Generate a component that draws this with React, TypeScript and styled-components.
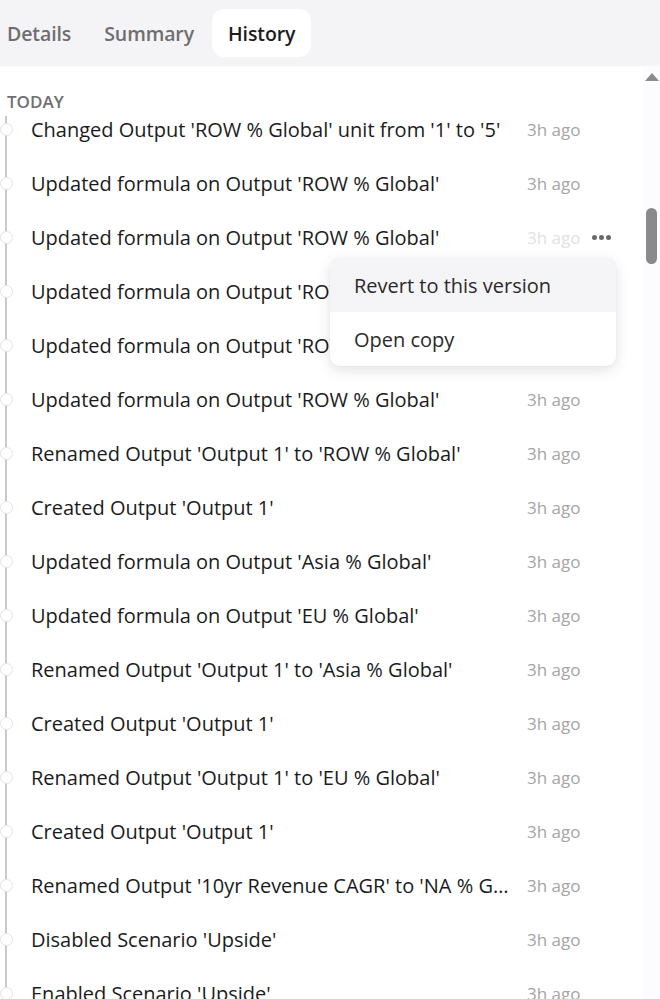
import { createGlobalStyle } from 'styled-components';
import styled from 'styled-components';

const GlobalStyle = createGlobalStyle`
    html, body {
        margin: 0;
        padding: 0;
        background: #ffffff;
        font-family: 'Open Sans', 'Noto Sans', Arial, sans-serif;
    }
    * {
        box-sizing: border-box;
    }
`;

interface Entry {
    text: string;
    time: string;
}

const entries: Entry[] = [
    { text: "Changed Output 'ROW % Global' unit from '1' to '5'", time: '3h ago' },
    { text: "Updated formula on Output 'ROW % Global'", time: '3h ago' },
    { text: "Updated formula on Output 'ROW % Global'", time: '3h ago' },
    { text: "Updated formula on Output 'ROW % Global'", time: '3h ago' },
    { text: "Updated formula on Output 'ROW % Global'", time: '3h ago' },
    { text: "Updated formula on Output 'ROW % Global'", time: '3h ago' },
    { text: "Renamed Output 'Output 1' to 'ROW % Global'", time: '3h ago' },
    { text: "Created Output 'Output 1'", time: '3h ago' },
    { text: "Updated formula on Output 'Asia % Global'", time: '3h ago' },
    { text: "Updated formula on Output 'EU % Global'", time: '3h ago' },
    { text: "Renamed Output 'Output 1' to 'Asia % Global'", time: '3h ago' },
    { text: "Created Output 'Output 1'", time: '3h ago' },
    { text: "Renamed Output 'Output 1' to 'EU % Global'", time: '3h ago' },
    { text: "Created Output 'Output 1'", time: '3h ago' },
    { text: "Renamed Output '10yr Revenue CAGR' to 'NA % Global'", time: '3h ago' },
    { text: "Disabled Scenario 'Upside'", time: '3h ago' },
    { text: "Enabled Scenario 'Upside'", time: '3h ago' },
];

// row the pointer is over: faded timestamp, "..." button and open menu
const HOVERED = 2;

const Page = styled.div`
    width: 660px;
    height: 999px;
    display: flex;
    flex-direction: column;
    overflow: hidden;
`;

const TabBar = styled.div`
    height: 66px;
    flex-shrink: 0;
    background: #f4f3f6;
    display: flex;
    align-items: center;
    padding: 0 0 0 7px;
`;

const Tab = styled.div<{ $active?: boolean }>`
    height: 48px;
    display: flex;
    align-items: center;
    padding: ${(p) => (p.$active ? '0 16px' : '0 33px 0 0')};
    margin-left: ${(p) => (p.$active ? '-15px' : '0')};
    border-radius: 12px;
    background: ${(p) => (p.$active ? '#ffffff' : 'transparent')};
    color: ${(p) => (p.$active ? '#1c1c1e' : '#6e6e70')};
    font-size: 19.5px;
    font-weight: 600;
    letter-spacing: -0.1px;
`;

const Body = styled.div`
    flex: 1;
    display: flex;
    min-height: 0;
`;

const List = styled.div`
    flex: 1;
    min-width: 0;
    display: flex;
    flex-direction: column;
`;

const SectionLabel = styled.div`
    height: 36px;
    padding: 26px 0 0 7px;
    font-size: 17px;
    line-height: 19px;
    font-weight: 600;
    color: #6f6f72;
`;

const Row = styled.div<{ $first?: boolean }>`
    position: relative;
    height: 54px;
    flex-shrink: 0;
    display: flex;
    align-items: center;
    padding: 0 32px 0 31px;

    &::before {
        content: '';
        position: absolute;
        left: 5px;
        top: ${(p) => (p.$first ? '14px' : '0')};
        bottom: 0;
        width: 2px;
        background: #c9c8cc;
    }

    &::after {
        content: '';
        position: absolute;
        left: 0;
        top: 50%;
        margin-top: -6px;
        width: 11px;
        height: 11px;
        border-radius: 50%;
        background: #ffffff;
        border: 1px solid #e3e2e6;
    }
`;

const EntryText = styled.span`
    flex: 1;
    min-width: 0;
    white-space: nowrap;
    overflow: hidden;
    text-overflow: ellipsis;
    font-size: 20px;
    color: #1b1b1d;
`;

const Time = styled.span<{ $faded?: boolean }>`
    width: 56px;
    margin-left: 15px;
    flex-shrink: 0;
    font-size: 17px;
    color: ${(p) => (p.$faded ? '#e2e1e4' : '#a5a4a8')};
    white-space: nowrap;
`;

const ActionSlot = styled.div`
    width: 19px;
    margin-left: 9px;
    flex-shrink: 0;
    display: flex;
    align-items: center;
    justify-content: space-between;
`;

const Dot = styled.span`
    width: 5px;
    height: 5px;
    border-radius: 50%;
    background: #6a6a6d;
`;

const Menu = styled.div`
    position: absolute;
    z-index: 2;
    top: 48px;
    left: 330px;
    width: 286px;
    border-radius: 10px;
    background: #ffffff;
    box-shadow: 0 4px 14px rgba(0, 0, 0, 0.12), 0 0 1px rgba(0, 0, 0, 0.12);
    overflow: hidden;
`;

const MenuItem = styled.div<{ $highlighted?: boolean }>`
    height: 54px;
    display: flex;
    align-items: center;
    padding-left: 24px;
    font-size: 20px;
    color: #2a2a2c;
    background: ${(p) => (p.$highlighted ? '#f5f4f7' : '#ffffff')};
`;

const ScrollTrack = styled.div`
    width: 17px;
    flex-shrink: 0;
    background: #fcfbfd;
    display: flex;
    flex-direction: column;
    align-items: center;
    padding-top: 7px;
`;

const ArrowUp = styled.div`
    width: 0;
    height: 0;
    border-left: 7px solid transparent;
    border-right: 7px solid transparent;
    border-bottom: 8px solid #8a898c;
`;

const Thumb = styled.div`
    width: 11px;
    height: 56px;
    margin-top: 127px;
    border-radius: 6px;
    background: #8a898c;
`;

export default function App() {
    return (
        <Page>
            <GlobalStyle />
            <TabBar>
                <Tab>Details</Tab>
                <Tab>Summary</Tab>
                <Tab $active>History</Tab>
            </TabBar>
            <Body>
                <List>
                    <SectionLabel>TODAY</SectionLabel>
                    {entries.map((e, i) => (
                        <Row key={i} $first={i === 0}>
                            <EntryText>{e.text}</EntryText>
                            <Time $faded={i === HOVERED}>{e.time}</Time>
                            <ActionSlot>
                                {i === HOVERED && (
                                    <>
                                        <Dot />
                                        <Dot />
                                        <Dot />
                                    </>
                                )}
                            </ActionSlot>
                            {i === HOVERED && (
                                <Menu>
                                    <MenuItem $highlighted>Revert to this version</MenuItem>
                                    <MenuItem>Open copy</MenuItem>
                                </Menu>
                            )}
                        </Row>
                    ))}
                </List>
                <ScrollTrack>
                    <ArrowUp />
                    <Thumb />
                </ScrollTrack>
            </Body>
        </Page>
    );
}
